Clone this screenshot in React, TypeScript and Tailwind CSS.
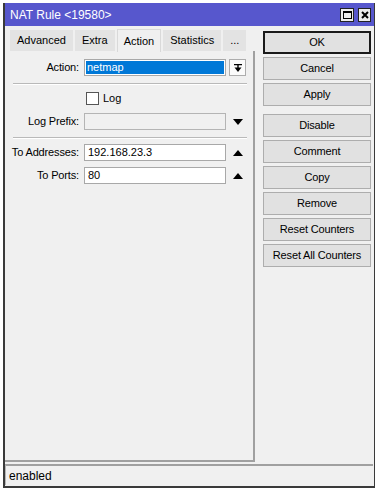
import type { ReactNode } from 'react'

const FONT = { fontFamily: '"Liberation Sans", Arial, sans-serif' }

const TABS = ['Advanced', 'Extra', 'Action', 'Statistics', '...']

const BUTTONS: { label: string; gap?: boolean; primary?: boolean }[] = [
  { label: 'OK', primary: true },
  { label: 'Cancel' },
  { label: 'Apply' },
  { label: 'Disable', gap: true },
  { label: 'Comment' },
  { label: 'Copy' },
  { label: 'Remove' },
  { label: 'Reset Counters' },
  { label: 'Reset All Counters' },
]

function TriDown() {
  return (
    <svg width="10" height="6" viewBox="0 0 10 6">
      <path d="M0 0 L10 0 L5 6 Z" fill="#000" />
    </svg>
  )
}

function TriUp() {
  return (
    <svg width="10" height="6" viewBox="0 0 10 6">
      <path d="M0 6 L10 6 L5 0 Z" fill="#000" />
    </svg>
  )
}

function Row({ label, children, side }: { label: string; children: ReactNode; side?: ReactNode }) {
  return (
    <div className="flex items-center h-[17px]">
      <div className="w-[75px] text-right pr-[1px] text-[11px] tracking-[-0.15px] text-black">{label}</div>
      <div className="ml-[4px] w-[142px] h-full">{children}</div>
      <div className="ml-[3px] w-[17px] h-full flex items-center justify-center">{side}</div>
    </div>
  )
}

export default function App() {
  return (
    <div className="w-[377px] h-[488px] bg-white overflow-hidden pl-[3px] pt-[3px]" style={FONT}>
      <div className="w-[372px] h-[485px] flex flex-col border-l-2 border-[#3a3a3a] border-r border-b-2">
        {/* title bar */}
        <div className="h-[23px] bg-[#5757cd] flex items-center pl-[5px] pr-[3px] shrink-0">
          <span className="text-white text-[12px] flex-1">NAT Rule &lt;19580&gt;</span>
          <div className="w-[14px] h-[14px] bg-[#ececec] border border-[#222] flex items-center justify-center">
            <div className="w-[9px] h-[8px] border border-black border-t-2" />
          </div>
          <div className="ml-[4px] w-[13px] h-[14px] bg-[#ececec] border border-[#222] flex items-center justify-center">
            <svg width="8" height="8" viewBox="0 0 8 8">
              <path d="M1 1 L7 7 M7 1 L1 7" stroke="#000" strokeWidth="2" />
            </svg>
          </div>
        </div>

        {/* body */}
        <div className="flex-1 bg-[#f0f0f0] flex flex-col">
          <div className="flex-1 flex pt-[2px]">
            {/* tabs + panel */}
            <div className="w-[250px] flex flex-col">
              <div className="flex items-end h-[23px] pl-[5px] gap-[2px]">
                {TABS.map(t =>
                  t === 'Action' ? (
                    <div
                      key={t}
                      className="h-[23px] px-[6px] flex items-center bg-[#f0f0f0] border border-b-0 border-[#d9d9d9] text-[11px] text-black -mb-[1px] relative"
                    >
                      {t}
                    </div>
                  ) : (
                    <div
                      key={t}
                      className="h-[21px] px-[7px] flex items-center bg-[#e3e3e3] text-[11px] text-black"
                    >
                      {t}
                    </div>
                  )
                )}
              </div>
              <div className="flex-1 border-r-2 border-b-2 border-[#a0a0a0] pt-[8px] flex flex-col">
                <Row
                  label="Action:"
                  side={
                    <div className="w-[17px] h-[17px] bg-[#fbfbfb] border border-[#adadad] flex items-center justify-center">
                      <svg width="8" height="8" viewBox="0 0 8 8">
                        <path d="M0 0.5 H8 M4 1 V4" stroke="#000" strokeWidth="1.4" />
                        <path d="M0.5 3.5 H7.5 L4 8 Z" fill="#000" />
                      </svg>
                    </div>
                  }
                >
                  <div className="h-full border border-[#a8a8a8] bg-white p-[1px]">
                    <div className="h-full bg-[#0078d7] text-white text-[11px] leading-[13px] pl-[1px]">netmap</div>
                  </div>
                </Row>
                <div className="ml-[8px] mr-[6px] mt-[7px] h-[2px] border-t border-[#b9b9b9] border-b border-b-white" />
                <div className="flex items-center h-[13px] mt-[7px] pl-[81px]">
                  <div className="w-[13px] h-[13px] border border-[#555] bg-white" />
                  <span className="ml-[4px] text-[11px] text-black">Log</span>
                </div>
                <div className="mt-[8px]">
                  <Row label="Log Prefix:" side={<TriDown />}>
                    <div className="h-full border border-[#b4b4b4] bg-[#f0f0f0]" />
                  </Row>
                </div>
                <div className="ml-[8px] mr-[6px] mt-[7px] h-[2px] border-t border-[#b9b9b9] border-b border-b-white" />
                <div className="mt-[5px]">
                  <Row label="To Addresses:" side={<TriUp />}>
                    <div className="h-full border border-[#a8a8a8] bg-white text-[11px] leading-[15px] pl-[3px] text-black">
                      192.168.23.3
                    </div>
                  </Row>
                </div>
                <div className="mt-[6px]">
                  <Row label="To Ports:" side={<TriUp />}>
                    <div className="h-full border border-[#a8a8a8] bg-white text-[11px] leading-[15px] pl-[3px] text-black">
                      80
                    </div>
                  </Row>
                </div>
              </div>
            </div>

            {/* buttons */}
            <div className="ml-[8px] w-[108px] flex flex-col gap-[3px] pt-[3px]">
              {BUTTONS.map(b => (
                <div
                  key={b.label}
                  className={
                    'h-[23px] flex items-center justify-center bg-[#e1e1e1] text-[11px] tracking-[-0.15px] text-black ' +
                    (b.primary ? 'border-2 border-[#1a1a1a] ' : 'border border-[#adadad] ') +
                    (b.gap ? 'mt-[5px]' : '')
                  }
                >
                  {b.label}
                </div>
              ))}
            </div>
          </div>

          {/* status bar */}
          <div className="mt-[2px] mb-[1px] ml-[0px] mr-[1px] h-[21px] border-t-2 border-[#a0a0a0] border-l border-l-[#b5b5b5] bg-[#f0f0f0] flex items-center pl-[3px] text-[12px] text-black">
            enabled
          </div>
        </div>
      </div>
    </div>
  )
}
